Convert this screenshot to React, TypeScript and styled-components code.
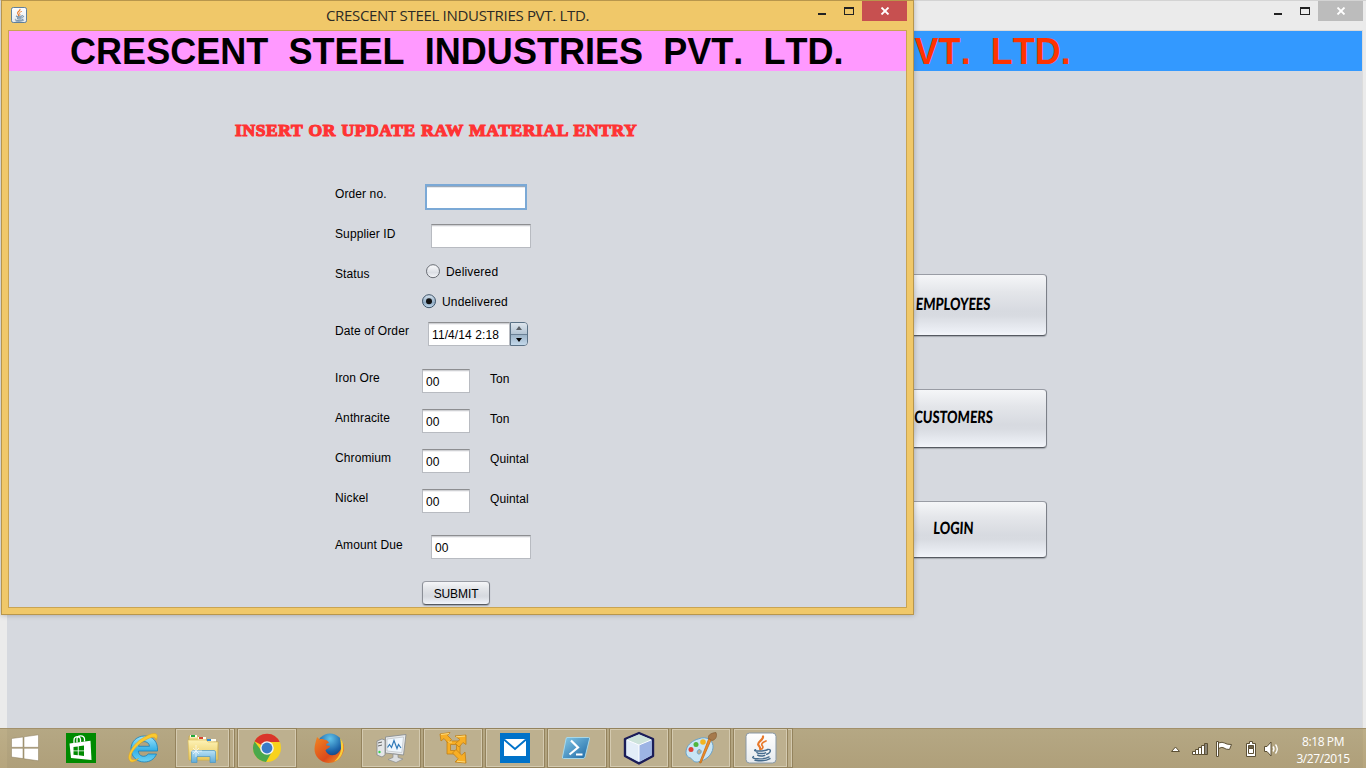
import React from 'react';
import styled, { createGlobalStyle, css } from 'styled-components';

const GlobalStyle = createGlobalStyle`
  *, *::before, *::after { box-sizing: border-box; }
  html, body { margin: 0; padding: 0; overflow: hidden; }
  body { font-family: "Liberation Sans", Arial, sans-serif; font-size: 12px; color: #000; }
  svg { display: block; flex: none; }
`;

const Desktop = styled.main`
  position: relative;
  width: 1366px;
  height: 768px;
  overflow: hidden;
  background: #d6d9df;
`;

/* ---------- windows ---------- */

const BackWindow = styled.section`
  position: absolute;
  inset: 0;
  display: flex;
  flex-direction: column;
  padding: 0 3px 0 7px;
  background: #ebebeb;
  border-top: 1px solid #d3d3d3;
`;

const BackBody = styled.div`
  flex: 1;
  background: #d6d9df;
  border-top: 1px solid #d9d9d9;
  border-right: 1px solid #dcdcdc;
`;

const FrontWindow = styled.section`
  position: absolute;
  left: 1px;
  top: 0;
  width: 913px;
  height: 615px;
  display: flex;
  flex-direction: column;
  padding: 0 6px 6px;
  background: #f0c869;
  border: 1px solid #b8964c;
  box-shadow: 0 0 5px rgba(60, 60, 60, 0.35);
`;

const FrontBody = styled.div`
  flex: 1;
  background: #d6d9df;
  border: 1px solid #c9a453;
`;

const TitleBar = styled.header`
  position: relative;
  display: flex;
  align-items: flex-start;
  justify-content: flex-end;
  height: 29px;
  flex: none;
`;

const TitleIcon = styled.div`
  margin: 6px auto 0 3px;
`;

const TitleText = styled.div`
  position: absolute;
  left: 0;
  right: 0;
  top: 4px;
  text-align: center;
  font: 400 15px/21px "Open Sans", "Noto Sans", sans-serif;
  letter-spacing: -0.31px;
  color: #2b2a26;
`;

const Controls = styled.div`
  display: flex;
`;

const ControlCell = styled.div<{ $w: number }>`
  width: ${p => p.$w}px;
  height: 20px;
  display: flex;
  justify-content: center;
  align-items: flex-start;
`;

const CloseCell = styled(ControlCell)<{ $bg: string }>`
  background: ${p => p.$bg};
  align-items: center;
`;

const Banner = styled.h1<{ $bg: string; $fg: string; $indent: number }>`
  margin: 0;
  height: 40px;
  padding-left: ${p => p.$indent}px;
  background: ${p => p.$bg};
  color: ${p => p.$fg};
  font: 700 36px/41px "Liberation Sans", Arial, sans-serif;
  font-kerning: none;
  letter-spacing: 0.04px;
  white-space: pre;
`;

const MenuColumn = styled.nav`
  display: flex;
  flex-direction: column;
  width: 187px;
  margin: 203px 0 0 853px;
`;

const glossy = css`
  border: 1px solid;
  border-color: #999ca4 #7c8088 #565a62 #8b8f97;
  background: linear-gradient(#f5f6f8 0%, #e4e6ea 28%, #d7dae0 60%, #d8dbe1 68%, #eceff5 94%, #f4f6fa 100%);
  box-shadow: 0 1px 1px rgba(90, 95, 105, 0.4);
`;

const MenuButton = styled.button<{ $h: number; $gap: number; $lift?: number }>`
  ${glossy}
  height: ${p => p.$h}px;
  margin: 0 0 ${p => p.$gap}px;
  padding: 0 0 ${p => p.$lift ?? 4}px;
  border-radius: 4px;
  font: 900 17px/20px Lato, "Open Sans", sans-serif;
  color: #000;
  span { display: inline-block; transform: scaleX(0.76) skewX(-4deg); }
`;

/* ---------- form ---------- */

const FormTitle = styled.h2`
  margin: 48px 0 0 226px;
  height: 65px;
  font: 700 17.5px/22px "Liberation Serif", "Times New Roman", serif;
  letter-spacing: 0.62px;
  word-spacing: 0.5px;
  color: #ff3333;
  -webkit-text-stroke: 1.2px #ff3333;
  white-space: nowrap;
`;

const Form = styled.form`
  display: flex;
  flex-direction: column;
  margin-left: 326px;
`;

const Row = styled.div<{ $h: number }>`
  display: flex;
  align-items: flex-start;
  height: ${p => p.$h}px;
`;

const Text = styled.span<{ $w?: number; $drop?: number }>`
  ${p => p.$w && `width: ${p.$w}px;`}
  flex: none;
  margin-top: ${p => p.$drop ?? 2}px;
  line-height: 16px;
  letter-spacing: 0.1px;
  white-space: nowrap;
`;

const Field = styled.input<{ $w: number; $focus?: boolean }>`
  width: ${p => p.$w}px;
  height: ${p => (p.$focus ? 26 : 24)}px;
  flex: none;
  margin: 0;
  padding: 2px 3px 0;
  outline: none;
  border: 1px solid;
  border-color: #8d8e91 #b8bbc1 #b8bbc1;
  border-radius: 0;
  background: #fff;
  box-shadow: inset 0 1px 0 #cfd0d3, inset 0 2px 0 #f1f1f3;
  font: 12px "Liberation Sans", Arial, sans-serif;
  letter-spacing: 0.1px;
  color: #000;
  ${p => p.$focus && css`
    border: 2px solid #7ba9d6;
    box-shadow: inset 0 1px 0 #9aa9ba, inset 0 2px 0 #e6e9ed;
  `}
`;

const Unit = styled(Text)`
  margin-left: 20px;
`;

const Choices = styled.div`
  display: flex;
  flex-direction: column;
  gap: 14px;
  margin-top: -1px;
`;

const Choice = styled.label<{ $indent: number }>`
  display: flex;
  align-items: center;
  gap: 5px;
  height: 16px;
  padding-left: ${p => p.$indent}px;
  span { margin-top: 1px; letter-spacing: 0.17px; }
`;

const Spinner = styled.div`
  display: flex;
  height: 24px;
`;

const SpinButtons = styled.div`
  width: 18px;
  height: 24px;
  display: flex;
  flex-direction: column;
  border: 1px solid #5b7286;
  border-radius: 0 4px 4px 0;
  overflow: hidden;
`;

const SpinButton = styled.div<{ $down?: boolean }>`
  flex: 1;
  display: flex;
  align-items: center;
  justify-content: center;
  background: ${p => (p.$down ? 'linear-gradient(#9db4c8, #c3d8ea)' : 'linear-gradient(#dde5ed, #b3c4d3)')};
  ${p => p.$down && 'border-top: 1px solid #6b8196;'}
`;

const Submit = styled.button`
  ${glossy}
  width: 68px;
  height: 24px;
  margin: 0 0 0 87px;
  padding: 1px 0 0;
  border-radius: 4px;
  font: 12px "Liberation Sans", Arial, sans-serif;
  letter-spacing: -0.1px;
`;

/* ---------- taskbar ---------- */

const Taskbar = styled.footer`
  position: absolute;
  left: 0;
  right: 0;
  bottom: 0;
  height: 40px;
  display: flex;
  background: linear-gradient(rgba(163, 141, 83, 0.65), rgba(156, 131, 72, 0.67));
  border-top: 1px solid #a2906a;
`;

const StartButton = styled.div`
  width: 51px;
  display: flex;
  align-items: center;
  justify-content: center;
  padding: 0 1px 2px 0;
`;

const Task = styled.div<{ $open?: boolean; $stack?: boolean }>`
  display: flex;
  align-items: center;
  justify-content: center;
  width: ${p => (p.$stack ? 55 : 60)}px;
  margin: -1px ${p => (p.$stack ? 0 : 2)}px 0 0;
  height: 40px;
  ${p => p.$open && css`
    border: 1px solid #94835d;
    background: #bdb08f;
    box-shadow: inset 0 0 0 1px #d4cab0;
  `}
`;

const StackEdge = styled.div`
  width: 5px;
  height: 40px;
  margin: -1px 2px 0 0;
  border: 1px solid #94835d;
  border-left: 0;
  background: #b9ab88;
  box-shadow: inset -1px 1px 0 #d4cab0;
`;

const Tray = styled.div`
  display: flex;
  align-items: center;
  margin-left: auto;
`;

const Clock = styled.time`
  width: 66px;
  margin: 2px 10px 0 10px;
  text-align: center;
  font: 12px/17px "Open Sans", "Noto Sans", sans-serif;
  letter-spacing: -0.4px;
  color: #fff;
`;

/* ---------- drawings ---------- */

const JavaIcon = ({ size }: { size: number }) => (
  <svg width={size} height={size} viewBox="0 0 32 32">
    <defs>
      <linearGradient id={`jv${size}`} x1="0" y1="0" x2="0" y2="1">
        <stop offset="0" stopColor="#fff" />
        <stop offset="1" stopColor="#e6eaee" />
      </linearGradient>
    </defs>
    <rect x="1" y="1" width="30" height="30" rx="3.5" fill={`url(#jv${size})`} stroke={size < 20 ? '#5f7f9c' : '#8998a5'} strokeWidth={size < 20 ? 2 : 1} />
    <g fill="none" strokeLinecap="round">
      <path d="M18 4.500c1 3-5.500 5-4.800 8 .4 1.700 2.500 2.500 2 5" stroke="#e8792b" strokeWidth="2.200" />
      <path d="M21 9c-3.500 1.400-5.200 3-3.700 4.800 1 1.200.8 2.200-.5 3.200" stroke="#e8792b" strokeWidth="1.700" />
      <path d="M10.500 17.800c-4 1.600 8 1.500 11.500.2M12 20.600c1 1.400 6.500 1.200 8.500.2M12.700 23.200c1.500 1.200 5.500 1 7 .2" stroke="#456b8d" strokeWidth="1.500" />
      <path d="M22.300 17.500c4.500-1 3.800 3.500-.6 4.700M8.500 24.500c-4.500 2.500 11 3.500 15.500.4M10 28.200c5 .8 12 .4 15-1.600" stroke="#456b8d" strokeWidth="1.400" />
    </g>
  </svg>
);

const MinGlyph = ({ color }: { color: string }) => (
  <svg width="8" height="20"><path d="M0 12h8v2H0z" fill={color} /></svg>
);

const MaxGlyph = ({ color }: { color: string }) => (
  <svg width="10" height="20"><path fillRule="evenodd" d="M0 6h10v8H0zM1 8v5h8V8z" fill={color} /></svg>
);

const CloseGlyph = () => (
  <svg width="10" height="8" viewBox="0 0 10 8"><path d="M1.500.5l7 7M8.500.5l-7 7" stroke="#fff" strokeWidth="1.800" /></svg>
);

const Radio = ({ on }: { on?: boolean }) => (
  <svg width="15" height="16" viewBox="0 0 15 16">
    <defs>
      <linearGradient id={on ? 'ron' : 'roff'} x1="0" y1="0" x2="0" y2="1">
        <stop offset="0" stopColor={on ? '#d8e4ef' : '#fdfdfe'} />
        <stop offset=".6" stopColor={on ? '#91acc4' : '#dcdfe5'} />
        <stop offset="1" stopColor={on ? '#c5dbee' : '#f5f6f9'} />
      </linearGradient>
    </defs>
    <circle cx="7" cy="8.200" r="6.500" fill={`url(#${on ? 'ron' : 'roff'})`} stroke={on ? '#3d5368' : '#696d74'} />
    {on && <circle cx="7" cy="8.200" r="3" fill="#111" />}
  </svg>
);

const Arrow = ({ down }: { down?: boolean }) => (
  <svg width="6" height="4" viewBox="0 0 6 4">
    <path d={down ? 'M0 0h6L3 4z' : 'M0 4h6L3 0z'} fill={down ? '#000' : '#5c6167'} />
  </svg>
);

const StartIcon = () => (
  <svg width="28" height="28" viewBox="0 0 28 28">
    <path d="M.5 4.500L12 3v10.300H.5zM13 2.800L27.500.8v12.500H13zM.5 14.300H12v10.300L.5 23zM13 14.300h14.500v12.500L13 24.800z" fill="#fff" stroke="#8b7d5c" strokeWidth=".5" />
  </svg>
);

const StoreIcon = () => (
  <svg width="30" height="30" viewBox="0 0 30 30">
    <path d="M0 0h30v30H0z" fill="#008a00" />
    <path d="M3.500 10.500L24.500 7.700 25.500 27 5 25z" fill="#fff" />
    <path d="M8 10V7c0-4 6-5 6.500-.5V9M11 9.500V6c0-4 7-4.500 7.500 0v2.500" fill="none" stroke="#fff" strokeWidth="1.300" />
    <path d="M7.500 14l4.300-.6v4H7.500zM12.700 13.300l5.300-.8v4.900h-5.300zM7.500 18.300h4.300v3.900l-4.300-.5zM12.700 18.300H18V23l-5.300-.7z" fill="#008a00" />
  </svg>
);

const IeIcon = () => (
  <svg width="32" height="32" viewBox="0 0 32 32">
    <defs>
      <linearGradient id="ie" x1="0" y1="0" x2="0" y2="1">
        <stop offset="0" stopColor="#9be4fb" />
        <stop offset=".55" stopColor="#35b0e6" />
        <stop offset="1" stopColor="#6dd2f4" />
      </linearGradient>
    </defs>
    <path fillRule="evenodd" d="M17.500 4C9.800 4 4 9.700 4 17s5.600 13 13.300 13c5.800 0 10.200-3 12.200-8h-8.300c-3 4-9.800 2.700-9.800-3H30.500C31.200 10 26 4 17.500 4zM11.500 14.300c.8-6.300 10.500-6.300 11 0z" fill="url(#ie)" stroke="#1681bd" strokeWidth=".8" />
    <path d="M3.500 29.500C-2 25 6 12 15 6.500 22 2 28.500 0 30 2.800c.7 1.400 0 3.600-1 5.200 0-3-2.500-4-8.500-1C11 11.500 2.500 21 4 26.300c.7 2.400 4.500 1.700 7.500.2-3 3-6.500 4.200-8 3z" fill="#fbc92f" stroke="#dfa21a" strokeWidth=".5" />
  </svg>
);

const ExplorerIcon = () => (
  <svg width="32" height="32" viewBox="0 0 32 32">
    <defs>
      <linearGradient id="fo" x1="0" y1="0" x2="0" y2="1">
        <stop offset="0" stopColor="#fdf2b5" /><stop offset="1" stopColor="#e9c758" />
      </linearGradient>
      <linearGradient id="fb" x1="0" y1="0" x2="0" y2="1">
        <stop offset="0" stopColor="#b9e2f5" /><stop offset="1" stopColor="#5fabd8" />
      </linearGradient>
    </defs>
    <path d="M2 8V4h9l2 2h6v2h8v2h4v18H2z" fill="#edd682" stroke="#c9a94e" strokeWidth=".8" />
    <path d="M3 3h7v2.500H3zM11 5h8v2.500h-8zM20 7h9v2.500h-9z" fill="#fffdf2" />
    <path d="M4 3h4v2H4z" fill="#20a83a" /><path d="M12 5h4v2h-4z" fill="#d8442e" /><path d="M20 7h4v2h-4z" fill="#2e8bd6" />
    <path d="M1 8h18l2 2h10l-1 18H2z" fill="url(#fo)" stroke="#d8b956" strokeWidth=".6" />
    <path d="M4.500 20q0-1.500 1.500-1.500h21q1.500 0 1.500 1.500v10.500H23v-6H10v6H4.500z" fill="url(#fb)" stroke="#4b97c6" strokeWidth=".7" />
    <path d="M9 13v12M3.500 19H15M6 16l6 6M12 16l-6 6" stroke="#fff" strokeWidth=".8" opacity=".8" />
  </svg>
);

const ChromeIcon = () => (
  <svg width="30" height="30" viewBox="0 0 30 30">
    <circle cx="15" cy="15" r="14" fill="#f8d21d" />
    <path d="M15 15L2.500 8.200A14 14 0 0 1 27.700 9H15z" fill="#d9352b" />
    <path d="M2.600 8.500A14 14 0 0 0 14 29l6-10.500L10 18.500z" fill="#4aa84c" />
    <circle cx="15" cy="15" r="6.800" fill="#f4f4f2" />
    <circle cx="15" cy="15" r="5.400" fill="#3a7bc8" />
  </svg>
);

const FirefoxIcon = () => (
  <svg width="32" height="32" viewBox="0 0 32 32">
    <defs>
      <radialGradient id="fg" cx=".5" cy=".2" r=".8">
        <stop offset="0" stopColor="#62c4ea" /><stop offset=".6" stopColor="#1c64a9" /><stop offset="1" stopColor="#12336c" />
      </radialGradient>
      <linearGradient id="ff" x1="0" y1="0" x2="1" y2="1">
        <stop offset="0" stopColor="#f08522" /><stop offset=".6" stopColor="#dc4a1b" /><stop offset="1" stopColor="#f2a42a" />
      </linearGradient>
    </defs>
    <circle cx="17" cy="14.500" r="13" fill="url(#fg)" />
    <path d="M4 5c1 .8 1.800 1.800 2.500 2.500 2-.8 4-.4 5 .2 1.800 0 3.500 1 4.500 3.300-2 .2-3 1-3 2.300l4 .8c0 2-3.500 2.400-4.500 4.400 2 5.500 8.500 6 12.500 2.500 3-3 5-7 5-10C31 14 32 17 29.500 22 27 28 21 31 15.500 31 6.500 30.300 1.500 24 1.500 17c0-4 1.500-8 2.500-12z" fill="url(#ff)" />
    <path d="M27 6c4.500 5 4.500 12 1 18-2 3-4.500 5-7 5.500 4-3.500 7-8 7-13.500 0-4-.3-7-1-10z" fill="#f9cf3a" />
  </svg>
);

const MonitorIcon = () => (
  <svg width="32" height="32" viewBox="0 0 32 32">
    <path d="M2 9l5-2 3 1v15l-3 2-5-2z" fill="#e4e6e8" stroke="#85898c" strokeWidth=".8" />
    <path d="M3 11l4-1M3 14l4-1" stroke="#666" /><circle cx="4.500" cy="20" r="1.200" fill="#39d54a" />
    <path d="M10.500 5L31 2.500 28.500 23l-18-2z" fill="#e9ebed" stroke="#8a8e91" strokeWidth=".9" />
    <path d="M12 7l16.500-2L26.800 20.500 12 19z" fill="#f0f7fd" stroke="#a5abb0" strokeWidth=".5" />
    <path d="M12.500 15.500l2-3 2 3 2.500-7 3 8 1.500-4 2.500 3.500" fill="none" stroke="#2f79b8" strokeWidth="1.200" />
    <path d="M18 22l5 .5v3l5 1.500-7 3.500-8-3 5-2z" fill="#dcdee0" stroke="#8a8e91" strokeWidth=".7" />
  </svg>
);

const VmwareIcon = () => (
  <svg width="30" height="34" viewBox="0 0 30 34">
    <g fill="#f7ae25" stroke="#c08018" strokeWidth=".8" strokeLinejoin="round">
      <path fillRule="evenodd" d="M9 10h13v13H9zM12.500 13.500v6H18.500v-6z" />
      <path d="M2 3l10-1.500-2.500 3 4 4-3.500 3.500-4-4.500L3 10z" />
      <path d="M17 5l11-1v9.500l-3-2L21 16l-3.500-3.500 4.500-4z" />
      <path d="M28 32l-11-1 3.200-3.200L14.500 22l3.500-3.500 5.700 5.700 3.300-3.200z" />
    </g>
    <path d="M3 3.500l8-1M18 5.800l9-.8M10 11h4M19 30.300l8 .7" stroke="#ffe287" strokeWidth=".9" />
  </svg>
);

const MailIcon = () => (
  <svg width="30" height="30" viewBox="0 0 30 30">
    <path d="M0 0h30v30H0z" fill="#0072c9" />
    <path d="M4 6h22v17H4z" fill="#fff" />
    <path d="M4 6.500l11 9.500L26 6.500" fill="none" stroke="#0072c9" strokeWidth="1.900" />
  </svg>
);

const PowerShellIcon = () => (
  <svg width="30" height="24" viewBox="0 0 30 24">
    <defs>
      <linearGradient id="ps" x1="0" y1="0" x2="1" y2="1">
        <stop offset="0" stopColor="#86c9e6" /><stop offset="1" stopColor="#1b66a4" />
      </linearGradient>
    </defs>
    <path d="M5 1.500h21.500q1.500 0 1 1.500l-4.500 18q-.4 1.500-2 1.500H1.500q-1.500 0-1-1.500L4 3q.2-1.500 1-1.500z" fill="url(#ps)" stroke="#a8dcf0" strokeWidth=".9" />
    <path d="M9 4.500l7 7L7.500 18.500M14 18.500h6.500" fill="none" stroke="#fff" strokeWidth="2.200" />
  </svg>
);

const CubeIcon = () => (
  <svg width="32" height="34" viewBox="0 0 32 34">
    <path d="M16 2l14 6v17l-14 7.500L2 25V8z" fill="#b9cfec" stroke="#1b1d58" strokeWidth="2.400" strokeLinejoin="round" />
    <path d="M16 3.500L28.500 8.500 16 13.500 3.500 8.500z" fill="#cde3da" />
    <path d="M3.500 9L16 14v16.800L3.500 24.300z" fill="#e3edf8" />
    <path d="M28.500 9L16 14v16.800l12.500-6.500z" fill="#9db4e4" />
    <path d="M16 14v16M4 9l12 5 12-5" fill="none" stroke="#fff" strokeWidth="1" />
  </svg>
);

const PaintIcon = () => (
  <svg width="34" height="32" viewBox="0 0 34 32">
    <path fillRule="evenodd" d="M14 7c9-4 16 2 15 9S22 28.500 13.500 30C9 30.500 8.500 27 6.500 26 3 25 1 22 2.500 17 4 12 9 8.500 14 7zM15 17.500c-2 .8-2.500 4-.5 4.500 3 .5 4-4.500.5-4.500z" fill="#c8e5f5" stroke="#6ba3c8" strokeWidth="1" />
    <circle cx="7" cy="17.500" r="2.500" fill="#e14136" /><circle cx="12" cy="12.500" r="2.500" fill="#4fb53e" /><circle cx="19" cy="10" r="2.800" fill="#f3b51f" />
    <path d="M27.500 7L17 31l-1.500-.3L25 6z" fill="#ef8c26" stroke="#bd6410" strokeWidth=".7" />
    <path d="M25 7c-2-3 1-6 7-6.500 1.500 4-.5 7.500-4 8z" fill="#a67a4c" stroke="#7d5831" strokeWidth=".6" />
  </svg>
);

const TrayIcons = () => (
  <svg width="110" height="20" viewBox="0 0 110 20" stroke="#5c5035" strokeWidth="1">
    <path d="M1.500 12.500h8l-4-4.500z" fill="#fff" />
    <path d="M22.500 12.500h3v3h-3zM25.500 10.500h3v5h-3zM28.500 8.500h3v7h-3zM31.500 6.500h3v9h-3z" fill="#fff" />
    <path d="M34.500 4.500h3v11h-3z" fill="#8a8578" />
    <path d="M46.500 2.500h2v15h-2zM48.500 4q4-1.500 6 0t7 1.500l-2 5q-4 0-5.500-1.500t-5.500.500z" fill="#fff" />
    <path d="M79.500 2.500h3v2h3v13h-9v-13h3z" fill="#fff" />
    <path d="M78.500 6.500h5v3h-5z" fill="#6d6249" /><path d="M78.500 9.500h5v5h-5z" fill="#fff" />
    <path d="M94.500 7.500h2.500l4-4.500v14l-4-4.500h-2.500z" fill="#fff" />
    <path d="M103 7.500q2 2.500 0 5M105.500 5.500q3.500 4.500 0 9" fill="none" stroke="#fff" strokeWidth="1.300" />
  </svg>
);

/* ---------- page ---------- */

const COMPANY = 'CRESCENT  STEEL  INDUSTRIES  PVT.  LTD.';

const MATERIALS = [
  { name: 'Iron Ore', unit: 'Ton', h: 40 },
  { name: 'Anthracite', unit: 'Ton', h: 40 },
  { name: 'Chromium', unit: 'Quintal', h: 40 },
  { name: 'Nickel', unit: 'Quintal', h: 46 },
];

const WindowControls = ({ color, closeBg }: { color: string; closeBg: string }) => (
  <Controls>
    <ControlCell $w={26}><MinGlyph color={color} /></ControlCell>
    <ControlCell $w={27}><MaxGlyph color={color} /></ControlCell>
    <CloseCell $w={45} $bg={closeBg}><CloseGlyph /></CloseCell>
  </Controls>
);

export default function App() {
  return (
    <Desktop>
      <GlobalStyle />
      <BackWindow>
        <TitleBar>
          <WindowControls color="#222" closeBg="#bcbcbc" />
        </TitleBar>
        <BackBody>
          <Banner $bg="#3399ff" $fg="#ff3300" $indent={883.5}>{'PVT.  LTD.'}</Banner>
          <MenuColumn>
            <MenuButton $h={62} $gap={53} $lift={2}><span>EMPLOYEES</span></MenuButton>
            <MenuButton $h={59} $gap={53}><span>CUSTOMERS</span></MenuButton>
            <MenuButton $h={57} $gap={0}><span>LOGIN</span></MenuButton>
          </MenuColumn>
        </BackBody>
      </BackWindow>

      <FrontWindow>
        <TitleBar>
          <TitleText>CRESCENT STEEL INDUSTRIES PVT. LTD.</TitleText>
          <TitleIcon><JavaIcon size={16} /></TitleIcon>
          <WindowControls color="#222" closeBg="#c75050" />
        </TitleBar>
        <FrontBody>
          <Banner $bg="#ff99ff" $fg="#000" $indent={61}>{COMPANY}</Banner>
          <FormTitle>INSERT OR UPDATE RAW MATERIAL ENTRY</FormTitle>
          <Form>
            <Row $h={40}>
              <Text $w={90}>Order no.</Text>
              <Field $w={102} $focus />
            </Row>
            <Row $h={40}>
              <Text $w={96}>Supplier ID</Text>
              <Field $w={100} />
            </Row>
            <Row $h={58}>
              <Text $w={87}>Status</Text>
              <Choices>
                <Choice $indent={4}><Radio /><Text $drop={0}>Delivered</Text></Choice>
                <Choice $indent={0}><Radio on /><Text $drop={0}>Undelivered</Text></Choice>
              </Choices>
            </Row>
            <Row $h={47}>
              <Text $w={93} $drop={1}>Date of Order</Text>
              <Spinner>
                <Field $w={82} defaultValue="11/4/14 2:18" />
                <SpinButtons>
                  <SpinButton><Arrow /></SpinButton>
                  <SpinButton $down><Arrow down /></SpinButton>
                </SpinButtons>
              </Spinner>
            </Row>
            {MATERIALS.map(m => (
              <Row key={m.name} $h={m.h}>
                <Text $w={87} $drop={1}>{m.name}</Text>
                <Field $w={48} defaultValue="00" />
                <Unit>{m.unit}</Unit>
              </Row>
            ))}
            <Row $h={46}>
              <Text $w={96}>Amount Due</Text>
              <Field $w={100} defaultValue="00" />
            </Row>
            <Submit type="button">SUBMIT</Submit>
          </Form>
        </FrontBody>
      </FrontWindow>

      <Taskbar>
        <StartButton><StartIcon /></StartButton>
        <Task><StoreIcon /></Task>
        <Task><IeIcon /></Task>
        <Task $open $stack><ExplorerIcon /></Task>
        <StackEdge />
        <Task $open><ChromeIcon /></Task>
        <Task><FirefoxIcon /></Task>
        <Task $open><MonitorIcon /></Task>
        <Task $open><VmwareIcon /></Task>
        <Task $open><MailIcon /></Task>
        <Task $open><PowerShellIcon /></Task>
        <Task $open><CubeIcon /></Task>
        <Task $open><PaintIcon /></Task>
        <Task $open $stack><JavaIcon size={32} /></Task>
        <StackEdge />
        <Tray>
          <TrayIcons />
          <Clock>8:18 PM<br />3/27/2015</Clock>
        </Tray>
      </Taskbar>
    </Desktop>
  );
}
